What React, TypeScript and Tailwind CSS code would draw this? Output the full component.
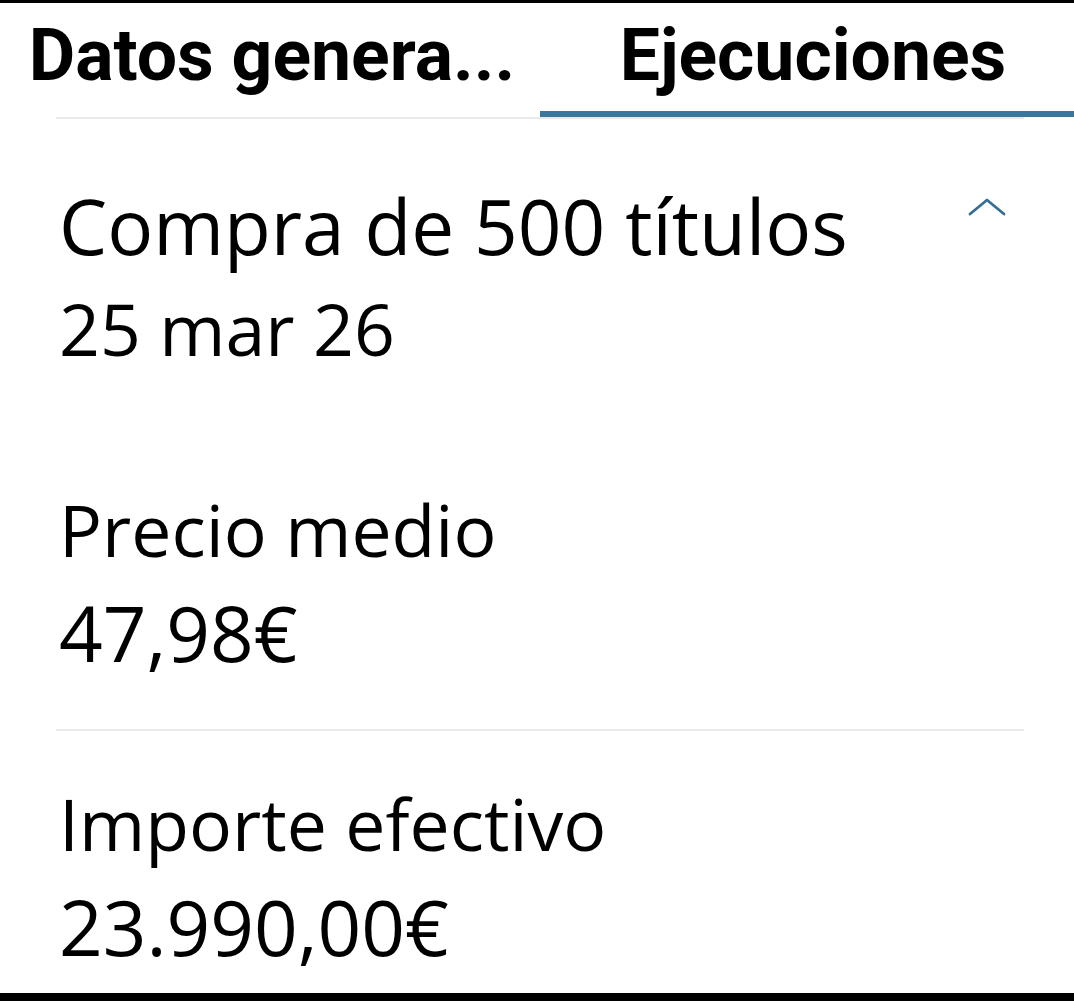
import React from "react";

const tabs = [
  { label: "Datos genera...", active: false, pad: "pl-[4px]" },
  { label: "Ejecuciones", active: true, pad: "pl-[12px]" },
];

function ChevronUp() {
  return (
    <svg width="40" height="18" viewBox="0 0 40 18" fill="none" aria-hidden="true">
      <polyline
        points="2,16 19,2 36,16"
        stroke="#356f96"
        strokeWidth="2.8"
        strokeLinecap="round"
        strokeLinejoin="round"
      />
    </svg>
  );
}

function Field({ label, value }: { label: string; value: string }) {
  return (
    <div className="flex flex-col">
      <div className="text-[71.5px] leading-[102px]">{label}</div>
      <div className="text-[76.5px] leading-[102px]">{value}</div>
    </div>
  );
}

export default function App() {
  return (
    <div className="w-full h-[1001px] bg-white border-t-[3px] border-b-[8px] border-black overflow-hidden flex flex-col text-black">
      {/* tab bar */}
      <div className="grid grid-cols-[540px_1fr] font-['Roboto',sans-serif] font-bold text-[71.5px]">
        {tabs.map((t) => (
          <div
            key={t.label}
            className={`${t.pad} pt-[10px] pb-[12px] leading-[86px] text-center whitespace-nowrap border-b-[6px] ${
              t.active ? "border-[#3b769c]" : "border-transparent"
            }`}
          >
            {t.label}
          </div>
        ))}
      </div>
      <div className="h-[2px] bg-[#e6eaed] ml-[56px] mr-[50px]" />

      {/* execution detail */}
      <div className="font-['Open_Sans','Noto_Sans',sans-serif] pl-[59px] pr-[62px] pt-[55px]">
        <div className="flex justify-between items-start">
          <div className="flex flex-col">
            <div className="text-[76.5px] leading-[102px]">Compra de 500 títulos</div>
            <div className="text-[71.5px] leading-[102px] mt-[2px]">25 mar 26</div>
          </div>
          <div className="mt-[24px] mr-[4px]">
            <ChevronUp />
          </div>
        </div>

        <div className="mt-[99px]">
          <Field label="Precio medio" value="47,98€" />
        </div>
      </div>

      <div className="h-[2px] bg-[#e6eaed] ml-[56px] mr-[50px] mt-[46px]" />

      <div className="font-['Open_Sans','Noto_Sans',sans-serif] pl-[59px] pr-[62px] pt-[42px]">
        <Field label="Importe efectivo" value="23.990,00€" />
      </div>
    </div>
  );
}
